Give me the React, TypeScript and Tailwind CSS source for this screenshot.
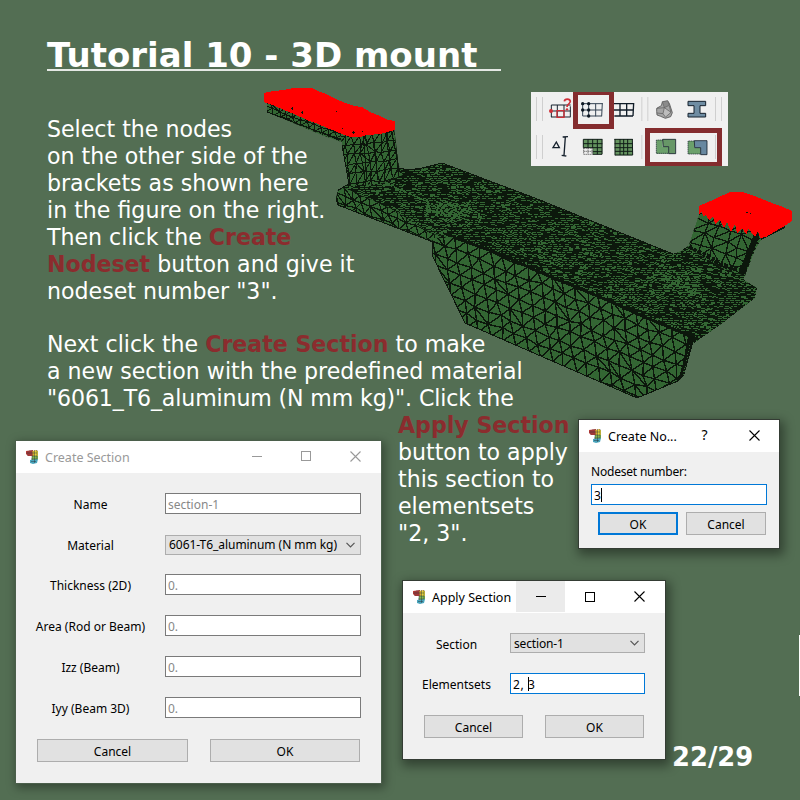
import React from "react";

type Pt = [number, number];

const rand = (seed: number) => {
  let s = seed;
  return () => {
    s = (s * 1664525 + 1013904223) % 4294967296;
    return s / 4294967296;
  };
};

/* Edges of a jittered triangular lattice spanned by the vectors u and v. */
function lattice(o: Pt, u: Pt, v: Pt, nu: number, nv: number, jitter: number, seed: number) {
  const r = rand(seed);
  const grid: Pt[][] = [];
  for (let j = 0; j <= nv; j++) {
    const row: Pt[] = [];
    for (let i = 0; i <= nu; i++) {
      row.push([
        o[0] + u[0] * i + v[0] * j + (r() - 0.5) * jitter,
        o[1] + u[1] * i + v[1] * j + (r() - 0.5) * jitter,
      ]);
    }
    grid.push(row);
  }
  const seg = (a: Pt, b: Pt) =>
    `M${a[0].toFixed(1)} ${a[1].toFixed(1)}L${b[0].toFixed(1)} ${b[1].toFixed(1)}`;
  let d = "";
  for (let j = 0; j <= nv; j++)
    for (let i = 0; i <= nu; i++) {
      if (i < nu) d += seg(grid[j][i], grid[j][i + 1]);
      if (j < nv) d += seg(grid[j][i], grid[j + 1][i]);
      if (i < nu && j < nv)
        d += r() < 0.85 ? seg(grid[j][i + 1], grid[j + 1][i]) : seg(grid[j][i], grid[j + 1][i + 1]);
    }
  return d;
}

/* Gaps left between the edges where elements are only a few pixels high. */
function slivers(x0: number, y0: number, x1: number, y1: number, density: number, seed: number) {
  const r = rand(seed);
  let d = "";
  for (let y = y0; y < y1; y += 2) {
    let x = x0 + Math.floor(r() * 4);
    while (x < x1) {
      const w = 2 + Math.floor(r() * 4);
      if (r() < density) {
        const h = r() < 0.12 ? 2 : 1;
        d += `M${x} ${y}h${w}v${h}h-${w}z`;
        if (r() < 0.3) d += `M${x + w} ${y + 1}h2v1h-2z`;
      }
      x += w + 1 + Math.floor(r() * 2);
    }
  }
  return d;
}

const skirt = "432,241 434,238 456,237 500,254 537,271 607,300 640,316 690,336 691,345 683,377 678,381 637,398 465,323 432,255";
const plate = "348,184 349,172 399,168 408,170 422,168 442,163 540,200 673,254 681,251 688,246 745,272 744,280 757,288 755,298 720,325 694,343 687,336 607,302 537,273 456,239 433,242 338,205 336,198 338,190";
const leftCol = "340,132 394,128 399,166 403,175 380,184 349,186 342,145";
const rightCol = "700,212 758,232 761,240 755,250 745,276 722,268 688,248 693,232";
const lip = "338,190 345,188 390,208 433,234 456,238 448,244 433,241 338,205 336,198";

function Model() {
  return (
    <svg className="absolute left-0 top-0 h-[420px] w-[800px]" viewBox="0 0 800 420" shapeRendering="crispEdges">
      <defs>
        <clipPath id="skirt"><polygon points={skirt} /></clipPath>
        <clipPath id="plate"><polygon points={plate} /></clipPath>
        <clipPath id="leftCol"><polygon points={leftCol} /></clipPath>
        <clipPath id="rightCol"><polygon points={rightCol} /></clipPath>
        <clipPath id="lip"><polygon points={lip} /></clipPath>
        <clipPath id="arm"><polygon points="267,100 345,128 342,142 322,135 267,112" /></clipPath>
      </defs>
      <polygon points={plate} fill="#0c180c" />
      <g clipPath="url(#plate)" fill="#336633">
        <path d={slivers(336, 164, 760, 345, 0.74, 7)} />
        <path d={slivers(425, 203, 470, 222, 0.6, 71)} />
        <path d={slivers(655, 270, 700, 294, 0.6, 17)} />
        <path d="M440 200l30 12M450 215l-24 -6M656 270l24 18M662 280l42 16M385 183l50 22" stroke="#336633" strokeWidth="1.5" strokeDasharray="3 2" />
      </g>
      <g clipPath="url(#lip)">
        <polygon points={lip} fill="#336633" />
        <path d={lattice([325, 180], [9, 3.7], [1.5, 9], 17, 5, 3, 5)} stroke="#0c160c" strokeWidth="1.2" />
      </g>
      <g clipPath="url(#arm)">
        <rect x="260" y="90" width="100" height="60" fill="#336633" />
        <path d={lattice([262, 88], [7, 2.6], [1, 6], 15, 8, 2, 12)} stroke="#0c160c" />
      </g>
      <path d="M267 112L340 140" stroke="#0c160c" />
      <g clipPath="url(#leftCol)">
        <polygon points={leftCol} fill="#336633" />
        <path d={lattice([330, 128], [7, -0.7], [1.1, 9.5], 12, 8, 2.5, 9)} stroke="#0c160c" strokeWidth="1.1" />
        <path d="M372 130l6 50M385 130l7 45M391 128l8 40M363 132l4 50" stroke="#0c160c" strokeWidth="1.2" />
      </g>
      <g clipPath="url(#rightCol)">
        <polygon points={rightCol} fill="#336633" />
        <path d={lattice([690, 190], [11.5, 4.6], [-3, 11.5], 11, 11, 3.5, 21)} stroke="#0c160c" strokeWidth="1.3" />
        <path d="M758 232L738 282" stroke="#0c160c" strokeWidth="6" />
        <path d="M688 248l20 8 14 9 22 6" stroke="#0c160c" strokeWidth="5" strokeDasharray="4 2 3 1" fill="none" />
      </g>
      <g clipPath="url(#skirt)">
        <polygon points={skirt} fill="#336633" />
        <path d={lattice([405, 205], [12, 4.9], [1.8, 12.8], 28, 14, 3.2, 3)} stroke="#0c160c" strokeWidth="1.4" />
      </g>
      <path d="M453 237L500 254 537 271 607 300 640 315 690 336" stroke="#0c160c" strokeWidth="3" fill="none" />
      <path d="M688 336h7l-5 18 -6 22 -6 5 5 -18z" fill="#0c160c" />
      <path d="M690 345l-7 31" stroke="#336633" strokeDasharray="1 2" />
      <path d="M336 198l2 7 95 37M432 241v14l33 68 172 75 41 -17" stroke="#0c160c" fill="none" />
      <path d="M338 190l11 -6 -7 -39M399 168l9 2 14 -2 20 -5 98 37 133 54" stroke="#0c160c" fill="none" />
      <path d="M761 239l24 -12" stroke="#0c160c" strokeWidth="2" />
      <polygon fill="#f00" points="264,93 273,91 284,90 293,88 312,88 318,91 326,94 334,98 345,103 354,106 362,107 370,112 380,116 388,120 395,121 395,130 380,134 367,135 360,137 350,137 342,134 335,131 327,128 318,124 307,120 294,114 284,110 275,106 264,102" />
      <path d="M291 108h2v1h-2zM292 107h1v3h-1zM301 112h2v1h-2zM302 111h1v3h-1zM336 111h1v1h-1zM342 128h1v1h-1zM352 132h3v1h-3zM353 131h1v3h-1zM362 131h1v1h-1z" fill="#0c160c" />
      <polygon fill="#f00" points="699,206 715,199 730,192 742,192 757,197 772,203 783,207 792,211 792,221 783,227 774,232 766,237 760,238 758,231 755,237 748,228 747,235 742,228 737,233 735,224 731,232 727,222 724,228 720,220 715,224 713,216 709,220 706,215 703,216 702,211 699,215" />
      <path d="M746 212h2v1h-2zM750 213h1v1h-1z" fill="#0c160c" />
    </svg>
  );
}

const ink = "#17222e";

function Cell({ x, y, w, children }: { x: number; y: number; w: number; children?: React.ReactNode }) {
  return (
    <svg className="h-[37px] shrink-0" width={w / 3} viewBox={`${x} ${y} ${w} 111`} fill="none">
      {children}
    </svg>
  );
}

const Bars = ({ d }: { d: string }) => <path d={d} stroke="#cfcfcf" strokeWidth="3" />;

function Toolbar() {
  return (
    <div className="absolute left-[531px] top-[92px] flex h-[74px] w-[197px] flex-col overflow-hidden bg-[#f0f0f0]">
      <div className="flex">
        <Cell x={18} y={21} w={40}><Bars d="M34.5 36v72M52.5 36v72" /></Cell>
        <Cell x={58} y={21} w={94}>
          <path d="M80 60h58M79 78h59M79 96h57M80 60v36M98 60v36M118 60v36M137 64v33" stroke={ink} strokeWidth="3" />
          <path d="M97 77h21v20h-21z" stroke="#d03038" strokeWidth="4" />
          <circle cx="79" cy="78" r="6" fill="#d03038" />
          <path d="M119 49c1-9 17-9 18 0 0 8-10 7-10 17" stroke="#d03038" strokeWidth="5" />
          <circle cx="127" cy="73" r="3.5" fill="#d03038" />
        </Cell>
        <Cell x={152} y={21} w={102}>
          <path d="M172 56h59M170 75h60M172 93h57M172 56v37M190 56v37M211 56v38M231 54l-2 40" stroke="#354352" strokeWidth="3" />
          <g fill="#0d1722"><circle cx="172" cy="56" r="5" /><circle cx="190" cy="56" r="5" /><circle cx="172" cy="75" r="5" /><circle cx="190" cy="75" r="5" /><circle cx="190" cy="93" r="5" /></g>
        </Cell>
        <Cell x={254} y={21} w={84}>
          <path d="M266 56h60M266 75h58M267 93h56M284 55v38M304 55v39M325 54l-2 39" stroke="#101c28" strokeWidth="4" />
        </Cell>
        <Cell x={338} y={21} w={40}><Bars d="M349.5 36v72M367.5 36v72" /></Cell>
        <Cell x={378} y={21} w={90}>
          <path d="M395 70l14-8 3-11 16-3 5 7 9 28-5 12-16 5-14-6-11-4-1-10z" fill="#a5a5a5" stroke="#555" strokeWidth="2.5" />
          <path d="M412 50l16-3 5 14-15 7z" fill="#8b8b8b" stroke="#606060" strokeWidth="2" />
          <path d="M418 68l20 14-16 15-8-11z" fill="#bdbdbd" />
          <path d="M396 70l22-2-4 18-18-2M418 68l20 14M414 86l8 11M433 63l5 19-16 14" stroke="#5b5b5b" strokeWidth="2" />
        </Cell>
        <Cell x={468} y={21} w={102}>
          <path d="M489 49h53v13h-17v23h17v11h-53V85h18V62h-18z" fill="#6f8da3" stroke={ink} strokeWidth="3" />
        </Cell>
        <Cell x={570} y={21} w={39}><Bars d="M571.5 36v72M589.5 36v72" /></Cell>
      </div>
      <div className="flex">
        <Cell x={18} y={132} w={40}><Bars d="M34.5 150v72M52.5 150v72" /></Cell>
        <Cell x={58} y={132} w={94}>
          <path d="M85 188l10-17 9 17z" stroke={ink} strokeWidth="4" />
          <path d="M114 156l16-1M122 156l-4 56M111 211l14 2" stroke={ink} strokeWidth="4" />
        </Cell>
        <Cell x={152} y={132} w={102}>
          <path d="M174 163h57v44h-29v-19h-28z" fill="#64935f" />
          <path d="M174 163h57M174 176h57M174 188h56M202 200h28M202 208h28M174 163v25M188 163v25M202 163v45M216 163v45M230 163v45" stroke="#101c18" strokeWidth="3" />
          <path d="M174 189h28v20h-28z" fill="#f0f0f0" />
          <path d="M175 190v18M188 190v18M200 190v18M175 190h26M175 199h26M175 208h26" stroke="#222" strokeWidth="2.5" strokeDasharray="3 3" />
        </Cell>
        <Cell x={254} y={132} w={84}>
          <path d="M268 163h53l1 48h-53z" fill="#64935f" />
          <path d="M267 163h55M268 176h54M268 188h54M269 199h54M269 210h53M269 162v49M284 162v48M295 162v48M307 162v48M321 162l1 48" stroke="#101c18" strokeWidth="3" />
        </Cell>
        <Cell x={338} y={132} w={40}><Bars d="M349.5 150v72" /></Cell>
        <Cell x={378} y={132} w={90}>
          <path d="M394 165h19v20h18v21h-37z" fill="#6ba06b" />
          <path d="M413 163h39v43h-21v-21h-16z" fill="#679767" stroke={ink} strokeWidth="2.5" />
          <path d="M413 165h-19v40h37" stroke={ink} strokeWidth="3" strokeDasharray="3 3" />
        </Cell>
        <Cell x={468} y={132} w={102}>
          <path d="M489 168h19v20h19v19h-38z" fill="#6ba06b" />
          <path d="M508 167h38v42h-19v-21h-18z" fill="#6888a0" stroke={ink} strokeWidth="2.5" />
          <path d="M508 168h-19v39h38" stroke={ink} strokeWidth="3" strokeDasharray="3 3" />
        </Cell>
        <Cell x={570} y={132} w={39}><Bars d="M571.5 150v72" /></Cell>
      </div>
      <div className="absolute left-[42px] top-[-2px] h-[39px] w-[41px] border-5 border-[#842c2e]" />
      <div className="absolute left-[114px] top-[36px] h-[38px] w-[77px] border-5 border-b-4 border-[#842c2e]" />
    </div>
  );
}

function AppIcon() {
  return (
    <svg className="h-[16px] w-[16px] shrink-0" viewBox="0 0 16 16">
      <path d="M1 2l7-1v6l-5 0L1 5z" fill="#c43c38" />
      <path d="M7 2l5-1v8l-4 2z" fill="#d8a62e" />
      <path d="M9 2l4 0v6l-4 1z" fill="#e5d23b" />
      <path d="M7 7l6 0v4l-6 0z" fill="#83b950" />
      <path d="M5 11l8-1-1 4-4 1-3-1z" fill="#4aa5bd" />
      <path d="M1 4h11M3 2v5M5 1v6M7 1v10M9.500 1v13M12 1v9M7 7h5M6 10h6M6 12.500h5" stroke="#26333b" strokeWidth=".45" fill="none" />
    </svg>
  );
}

const Min = () => <span className="h-px w-[10px] bg-current" />;
const Max = () => <span className="h-[10px] w-[10px] border border-current" />;
const Close = () => (
  <svg className="h-[11px] w-[11px]" viewBox="0 0 11 11"><path d="M.5 .5l10 10M10.500 .5l-10 10" stroke="currentColor" strokeWidth="1.1" /></svg>
);

const Btn = ({ className = "", children }: { className?: string; children: string }) => (
  <button className={`flex h-[23px] items-center justify-center bg-[#e1e1e1] pt-[2px] ${className}`}>{children}</button>
);

const Chevron = () => (
  <svg className="h-[6px] w-[9px]" viewBox="0 0 9 6"><path d="M.5 .8l4 4 4-4" stroke="#555" strokeWidth="1.2" fill="none" /></svg>
);

const rows: [string, string][] = [
  ["Name", "section-1"],
  ["Material", "6061-T6_aluminum (N mm kg)"],
  ["Thickness (2D)", "0."],
  ["Area (Rod or Beam)", "0."],
  ["Izz (Beam)", "0."],
  ["Iyy (Beam 3D)", "0."],
];

const Em = ({ children }: { children: string }) => <b className="font-['DejaVu_Sans',sans-serif] text-[#8b2c2e]">{children}</b>;

export default function App() {
  return (
    <div className="relative h-[800px] w-[800px] overflow-hidden bg-[#536e53] font-['Noto_Sans',sans-serif] text-[12px] leading-[16px] text-black">
      <Model />
      <main className="relative pl-[47px] pt-[35px] font-['DejaVu_Sans',sans-serif] text-[22.1px] leading-[27px] text-white">
        <h1 className="h-[36px] w-[454px] whitespace-nowrap border-b-2 border-[#e4e8e4] text-[34px] font-bold leading-[40px]">Tutorial 10 - 3D mount</h1>
        <p className="mt-[45px] whitespace-nowrap">
          Select the nodes<br />on the other side of the<br />brackets as shown here<br />in the figure on the right.<br />
          Then click the <Em>Create</Em><br /><Em>Nodeset</Em> button and give it<br />nodeset number "3".
        </p>
        <p className="mt-[26px] whitespace-nowrap">
          Next click the <Em>Create Section</Em> to make<br />a new section with the predefined material<br /><span className="tracking-[-0.13px]">"6061_T6_aluminum (N mm kg)". Click the</span>
        </p>
        <p className="ml-[351px] whitespace-nowrap">
          <Em>Apply Section</Em><br />button to apply<br />this section to<br />elementsets<br />"2, 3".
        </p>
      </main>
      <div className="absolute left-[672px] top-[742px] font-['DejaVu_Sans',sans-serif] text-[25.8px] font-bold leading-[30px] text-white">22/29</div>
      <div className="absolute left-[799px] top-[635px] h-[61px] w-px bg-white" />
      <Toolbar />

      <section className="absolute left-[16px] top-[441px] h-[342px] w-[365px] bg-[#f0f0f0] shadow-[0_0_0_1px_#4b5f4b,2px_3px_9px_2px_rgba(0,0,0,0.35)]">
        <header className="flex h-[32px] items-center bg-white pl-[9px] text-[#999]">
          <AppIcon />
          <span className="ml-[4px] grow pt-px text-[12.5px]">Create Section</span>
          <div className="flex h-full w-[149px] items-center pb-[2px]">
            <span className="flex w-[49px] justify-center"><Min /></span>
            <span className="flex w-[50px] justify-center"><Max /></span>
            <span className="flex w-[49px] justify-center"><Close /></span>
          </div>
        </header>
        {rows.map(([label, value], i) => (
          <div key={label} className={`flex h-[21px] items-center ${i === 2 ? "mt-[19px]" : "mt-[20px]"}`}>
            <span className="w-[149px] pt-[2px] text-center">{label}</span>
            {i === 1 ? (
              <div className="flex h-[20px] w-[196px] items-center justify-between whitespace-nowrap border border-[#adadad] bg-[#e1e1e1] pl-[3px] pr-[5px]">
                <span className="tracking-[-0.05px]">{value}</span><Chevron />
              </div>
            ) : (
              <div className="flex h-[21px] w-[196px] items-center border border-[#7a7a7a] bg-white pl-[2px] pt-[2px] text-[#888]">{value}</div>
            )}
          </div>
        ))}
        <div className="mt-[21px] flex gap-[22px] pl-[21px]">
          <Btn className="w-[151px] border border-[#adadad]">Cancel</Btn>
          <Btn className="w-[150px] border border-[#adadad]">OK</Btn>
        </div>
      </section>

      <section className="absolute left-[579px] top-[420px] h-[128px] w-[200px] bg-[#f0f0f0] shadow-[0_0_0_1px_#343c34,2px_4px_10px_3px_rgba(0,0,0,0.4)]">
        <header className="flex h-[32px] items-center bg-white pl-[9px]">
          <AppIcon />
          <span className="ml-[4px] grow pt-px text-[12.5px]">Create No...</span>
          <div className="flex w-[100px] items-center pb-[2px]">
            <span className="w-[51px] text-center text-[14px]">?</span>
            <span className="flex w-[49px] justify-center"><Close /></span>
          </div>
        </header>
        <div className="px-[12px] pt-[12px]">
          <p className="tracking-[-0.2px]">Nodeset number:</p>
          <div className="mt-[4px] flex h-[21px] w-[176px] items-center border border-[#0078d7] bg-white pl-[2px]">
            <span className="pt-[2px]">3</span><i className="h-[14px] w-px bg-black" />
          </div>
          <div className="mt-[7px] flex gap-[8px] pl-[7px]">
            <Btn className="w-[80px] border-2 border-[#0078d7]">OK</Btn>
            <Btn className="w-[80px] border border-[#adadad]">Cancel</Btn>
          </div>
        </div>
      </section>

      <section className="absolute left-[403px] top-[581px] h-[178px] w-[262px] bg-[#f0f0f0] shadow-[0_0_0_1px_#343c34,2px_4px_10px_3px_rgba(0,0,0,0.4)]">
        <header className="flex h-[32px] items-center bg-white pl-[9px]">
          <AppIcon />
          <span className="ml-[4px] w-[84px] whitespace-nowrap pt-px text-[12.5px]">Apply Section</span>
          <div className="flex h-full">
            <span className="flex h-[31px] w-[49px] items-center justify-center bg-[#ebebeb]"><Min /></span>
            <span className="flex h-[31px] w-[50px] items-center justify-center"><Max /></span>
            <span className="flex h-[31px] w-[49px] items-center justify-center"><Close /></span>
          </div>
        </header>
        <div className="mt-[20px] flex h-[20px] items-center">
          <span className="w-[107px] pt-[3px] text-center">Section</span>
          <div className="flex h-[20px] w-[135px] items-center justify-between border border-[#adadad] bg-[#e1e1e1] pl-[3px] pr-[5px]"><span className="pt-px tracking-[-0.15px]">section-1</span><Chevron /></div>
        </div>
        <div className="mt-[20px] flex h-[21px] items-center">
          <span className="w-[107px] pt-[2px] text-center">Elementsets</span>
          <div className="flex h-[21px] w-[135px] items-center border border-[#0078d7] bg-white pl-[2px]">
            <span className="whitespace-pre pt-[2px] tracking-[0.6px]">2, </span><i className="h-[14px] w-px bg-black" /><span className="-ml-px pt-[2px]">3</span>
          </div>
        </div>
        <div className="mt-[21px] flex gap-[22px] pl-[21px]">
          <Btn className="w-[99px] border border-[#adadad]">Cancel</Btn>
          <Btn className="w-[99px] border border-[#adadad]">OK</Btn>
        </div>
      </section>
    </div>
  );
}
